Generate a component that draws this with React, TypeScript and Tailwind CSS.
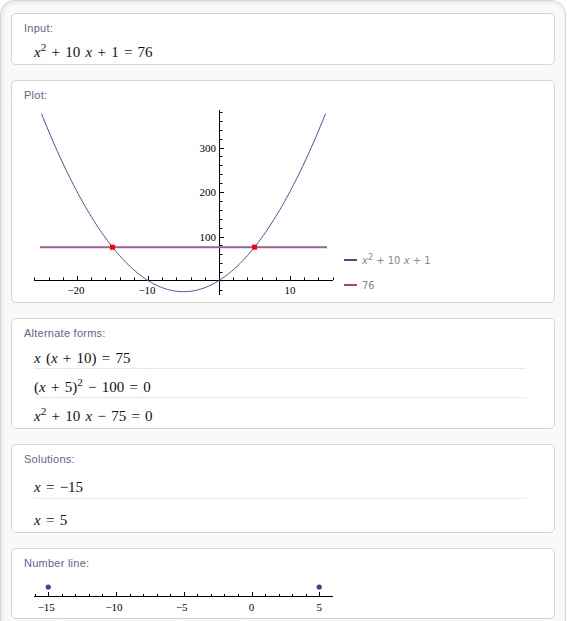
const X0 = 219;
const XS = 7.1;
const Y0 = 281;
const YS = 0.445;
const px = (x: number) => X0 + XS * x;
const py = (y: number) => Y0 - YS * y;

const f = (x: number) => x * x + 10 * x + 1;

const curve = Array.from({ length: 161 }, (_, i) => {
  const x = -25 + i * 0.25;
  return `${i === 0 ? 'M' : 'L'}${px(x).toFixed(2)},${py(f(x)).toFixed(2)}`;
}).join(' ');

const yTicks = Array.from({ length: 21 }, (_, i) => -20 + i * 20).filter((v) => v !== 0);
const xTicks = Array.from({ length: 22 }, (_, i) => -26 + i * 2).filter((v) => v !== 0);

const NX = (v: number) => 251.5 + 13.55 * v;
const nTicks = Array.from({ length: 22 }, (_, i) => -16 + i);

function X() {
  return <i>x</i>;
}

function Pod({ title, h, children }: { title: string; h: string; children: React.ReactNode }) {
  return (
    <section className={`rounded-[5px] border border-[#d6d6d6] bg-white px-[12px] pt-[6px] ${h}`}>
      <h3 className="h-4 font-['Liberation_Sans',Arial,sans-serif] text-[11px] leading-4 tracking-[0.25px] text-[#675e93]">
        {title}
      </h3>
      {children}
    </section>
  );
}

// one line of typeset math, optionally with a divider above
function Row({ children, cls }: { children: React.ReactNode; cls: string }) {
  return (
    <div
      className={`ml-[10px] w-[492px] font-['Liberation_Serif','Times_New_Roman',serif] text-[15px] leading-[18px] text-[#111] [word-spacing:1.5px] ${cls}`}
    >
      {children}
    </div>
  );
}

function Plot() {
  return (
    <svg width={519} height={198} className="block">
      <g transform="translate(-24,-103)">
        {/* axes */}
        <line x1={34} y1={280.5} x2={333} y2={280.5} stroke="#000" strokeWidth={1} />
        <line x1={219.5} y1={110} x2={219.5} y2={295} stroke="#000" strokeWidth={1} />
        {yTicks.map((v) => (
          <line
            key={v}
            x1={220}
            x2={v % 100 === 0 ? 224 : 222.5}
            y1={Math.round(py(v)) + 0.5}
            y2={Math.round(py(v)) + 0.5}
            stroke="#000"
            strokeWidth={1}
          />
        ))}
        {xTicks.map((v) => (
          <line
            key={v}
            x1={Math.round(px(v)) + 0.5}
            x2={Math.round(px(v)) + 0.5}
            y1={280}
            y2={v % 10 === 0 ? 276 : 277.5}
            stroke="#000"
            strokeWidth={1}
          />
        ))}
        <g fontFamily="Liberation Serif, Times New Roman, serif" fontSize={11} fill="#000">
          {[100, 200, 300].map((v) => (
            <text key={v} x={216} y={py(v) + 4} textAnchor="end">
              {v}
            </text>
          ))}
          {[-20, -10, 10].map((v) => (
            <text key={v} x={px(v) - (v < 0 ? 1 : 0)} y={294} textAnchor="middle">
              {v < 0 ? `\u2212${-v}` : v}
            </text>
          ))}
        </g>
        {/* horizontal line y = 76 */}
        <line x1={40} y1={py(76)} x2={327} y2={py(76)} stroke="#b27aa3" strokeWidth={2} />
        <line x1={40} y1={py(76)} x2={327} y2={py(76)} stroke="#8e4a7c" strokeWidth={0.8} />
        {/* parabola */}
        <path d={curve} fill="none" stroke="#4d4dab" strokeWidth={1} />
        {/* intersections */}
        <rect x={px(-15) - 2.5} y={py(76) - 2.5} width={5} height={5} fill="#ff0000" />
        <rect x={px(5) - 2.5} y={py(76) - 2.5} width={5} height={5} fill="#ff0000" />
        {/* legend */}
        <line x1={344} y1={260} x2={357} y2={260} stroke="#4848a0" strokeWidth={2} />
        <line x1={344} y1={285} x2={357} y2={285} stroke="#a3457f" strokeWidth={2} />
        <g fontFamily="DejaVu Sans, Verdana, sans-serif" fontSize={10} fill="#8a8a8a">
          <text x={362} y={263.5}>
            <tspan fontStyle="italic">x</tspan>
            <tspan dy={-4} fontSize={8}>
              2
            </tspan>
            <tspan dy={4}> + 10 </tspan>
            <tspan fontStyle="italic">x</tspan>
            <tspan> + 1</tspan>
          </text>
          <text x={362} y={288.5}>
            76
          </text>
        </g>
      </g>
    </svg>
  );
}

function NumberLine() {
  return (
    <svg width={519} height={46} className="block">
      <g transform="translate(-24,-572)">
        <line x1={34} y1={597.5} x2={333} y2={597.5} stroke="#000" strokeWidth={1} />
        {nTicks.map((v) => (
          <line
            key={v}
            x1={Math.round(NX(v)) + 0.5}
            x2={Math.round(NX(v)) + 0.5}
            y1={597}
            y2={v % 5 === 0 ? 593 : 595}
            stroke="#000"
            strokeWidth={1}
          />
        ))}
        <circle cx={NX(-15)} cy={588} r={2.6} fill="#3c3c9c" />
        <circle cx={NX(5)} cy={588} r={2.6} fill="#3c3c9c" />
        <g fontFamily="Liberation Serif, Times New Roman, serif" fontSize={11} fill="#000">
          {[-15, -10, -5, 0, 5].map((v) => (
            <text key={v} x={NX(v) - (v < 0 ? 2 : 0)} y={612} textAnchor="middle">
              {v < 0 ? `\u2212${-v}` : v}
            </text>
          ))}
        </g>
      </g>
    </svg>
  );
}

export default function App() {
  return (
    <div className="h-[621px] w-[567px] overflow-hidden bg-white">
      <div className="h-[640px] w-[566px] rounded-t-[14px] border border-[#d8d8d8] bg-[#f9f9f9] px-[10px] pt-[12px] shadow-[inset_1px_1px_4px_rgba(0,0,0,0.10)]">
        <div className="flex flex-col gap-[15px]">
          <Pod title="Input:" h="h-[52px]">
            <Row cls="mt-[7px]">
              <X />
              <sup>2</sup> + 10 <X /> + 1 = 76
            </Row>
          </Pod>

          <Pod title="Plot:" h="h-[223px]">
            <Plot />
          </Pod>

          <Pod title="Alternate forms:" h="h-[111px]">
            <Row cls="mt-[8px] pb-[1px]">
              <X /> (<X /> + 10) = 75
            </Row>
            <Row cls="border-t border-[#eee8da] pt-[9px] pb-[1px]">
              (<X /> + 5)<sup>2</sup> − 100 = 0
            </Row>
            <Row cls="border-t border-[#eee8da] pt-[9px]">
              <X />
              <sup>2</sup> + 10 <X /> − 75 = 0
            </Row>
          </Pod>

          <Pod title="Solutions:" h="h-[89px]">
            <Row cls="mt-[11px] pb-[2px]">
              <X /> = −15
            </Row>
            <Row cls="border-t border-[#eee8da] pt-[12px]">
              <X /> = 5
            </Row>
          </Pod>

          <Pod title="Number line:" h="h-[71px]">
            <NumberLine />
          </Pod>
        </div>
      </div>
    </div>
  );
}
